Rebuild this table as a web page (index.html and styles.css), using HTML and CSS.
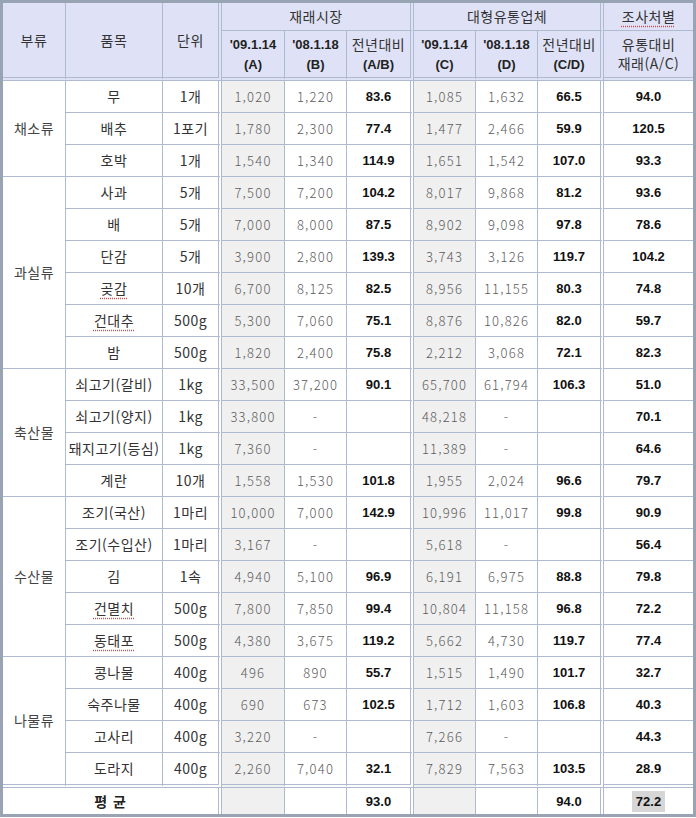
FILE: index.html
```html
<!DOCTYPE html>
<html lang="ko">
<head>
<meta charset="utf-8">
<title>품목별 가격 비교</title>
<link rel="stylesheet" href="styles.css">
</head>
<body>
<table class="tbl">
  <colgroup>
    <col class="c-cat"><col class="c-item"><col class="c-unit">
    <col class="c-a"><col class="c-b"><col class="c-ab">
    <col class="c-c"><col class="c-d"><col class="c-cd">
    <col class="c-ac">
  </colgroup>
  <thead>
    <tr class="h1">
      <th rowspan="2" class="db">부류</th>
      <th rowspan="2" class="db">품목</th>
      <th rowspan="2" class="db dr">단위</th>
      <th colspan="3" class="dr">재래시장</th>
      <th colspan="3" class="dr">대형유통업체</th>
      <th class="last"><span class="spell">조사처별</span></th>
    </tr>
    <tr class="h2">
      <th class="db"><span class="hd">'09.1.14<br>(A)</span></th>
      <th class="db"><span class="hd">'08.1.18<br>(B)</span></th>
      <th class="db dr">전년대비<br><span class="hd">(A/B)</span></th>
      <th class="db"><span class="hd">'09.1.14<br>(C)</span></th>
      <th class="db"><span class="hd">'08.1.18<br>(D)</span></th>
      <th class="db dr">전년대비<br><span class="hd">(C/D)</span></th>
      <th class="db last">유통대비<br>재래(A/C)</th>
    </tr>
  </thead>
  <tbody>
    <tr><td rowspan="3" class="cat">채소류</td><td class="item">무</td><td class="unit dr">1개</td><td class="n g">1,020</td><td class="n">1,220</td><td class="b dr">83.6</td><td class="n g">1,085</td><td class="n">1,632</td><td class="b dr">66.5</td><td class="b last">94.0</td></tr>
    <tr><td class="item">배추</td><td class="unit dr">1포기</td><td class="n g">1,780</td><td class="n">2,300</td><td class="b dr">77.4</td><td class="n g">1,477</td><td class="n">2,466</td><td class="b dr">59.9</td><td class="b last">120.5</td></tr>
    <tr><td class="item">호박</td><td class="unit dr">1개</td><td class="n g">1,540</td><td class="n">1,340</td><td class="b dr">114.9</td><td class="n g">1,651</td><td class="n">1,542</td><td class="b dr">107.0</td><td class="b last">93.3</td></tr>

    <tr><td rowspan="6" class="cat">과실류</td><td class="item">사과</td><td class="unit dr">5개</td><td class="n g">7,500</td><td class="n">7,200</td><td class="b dr">104.2</td><td class="n g">8,017</td><td class="n">9,868</td><td class="b dr">81.2</td><td class="b last">93.6</td></tr>
    <tr><td class="item">배</td><td class="unit dr">5개</td><td class="n g">7,000</td><td class="n">8,000</td><td class="b dr">87.5</td><td class="n g">8,902</td><td class="n">9,098</td><td class="b dr">97.8</td><td class="b last">78.6</td></tr>
    <tr><td class="item">단감</td><td class="unit dr">5개</td><td class="n g">3,900</td><td class="n">2,800</td><td class="b dr">139.3</td><td class="n g">3,743</td><td class="n">3,126</td><td class="b dr">119.7</td><td class="b last">104.2</td></tr>
    <tr><td class="item"><span class="spell">곶감</span></td><td class="unit dr">10개</td><td class="n g">6,700</td><td class="n">8,125</td><td class="b dr">82.5</td><td class="n g">8,956</td><td class="n">11,155</td><td class="b dr">80.3</td><td class="b last">74.8</td></tr>
    <tr><td class="item"><span class="spell">건대추</span></td><td class="unit dr">500g</td><td class="n g">5,300</td><td class="n">7,060</td><td class="b dr">75.1</td><td class="n g">8,876</td><td class="n">10,826</td><td class="b dr">82.0</td><td class="b last">59.7</td></tr>
    <tr><td class="item">밤</td><td class="unit dr">500g</td><td class="n g">1,820</td><td class="n">2,400</td><td class="b dr">75.8</td><td class="n g">2,212</td><td class="n">3,068</td><td class="b dr">72.1</td><td class="b last">82.3</td></tr>

    <tr><td rowspan="4" class="cat">축산물</td><td class="item">쇠고기(갈비)</td><td class="unit dr">1kg</td><td class="n g">33,500</td><td class="n">37,200</td><td class="b dr">90.1</td><td class="n g">65,700</td><td class="n">61,794</td><td class="b dr">106.3</td><td class="b last">51.0</td></tr>
    <tr><td class="item">쇠고기(양지)</td><td class="unit dr">1kg</td><td class="n g">33,800</td><td class="n">-</td><td class="b dr"></td><td class="n g">48,218</td><td class="n">-</td><td class="b dr"></td><td class="b last">70.1</td></tr>
    <tr><td class="item">돼지고기(등심)</td><td class="unit dr">1kg</td><td class="n g">7,360</td><td class="n">-</td><td class="b dr"></td><td class="n g">11,389</td><td class="n">-</td><td class="b dr"></td><td class="b last">64.6</td></tr>
    <tr><td class="item">계란</td><td class="unit dr">10개</td><td class="n g">1,558</td><td class="n">1,530</td><td class="b dr">101.8</td><td class="n g">1,955</td><td class="n">2,024</td><td class="b dr">96.6</td><td class="b last">79.7</td></tr>

    <tr><td rowspan="5" class="cat">수산물</td><td class="item">조기(국산)</td><td class="unit dr">1마리</td><td class="n g">10,000</td><td class="n">7,000</td><td class="b dr">142.9</td><td class="n g">10,996</td><td class="n">11,017</td><td class="b dr">99.8</td><td class="b last">90.9</td></tr>
    <tr><td class="item">조기(수입산)</td><td class="unit dr">1마리</td><td class="n g">3,167</td><td class="n">-</td><td class="b dr"></td><td class="n g">5,618</td><td class="n">-</td><td class="b dr"></td><td class="b last">56.4</td></tr>
    <tr><td class="item">김</td><td class="unit dr">1속</td><td class="n g">4,940</td><td class="n">5,100</td><td class="b dr">96.9</td><td class="n g">6,191</td><td class="n">6,975</td><td class="b dr">88.8</td><td class="b last">79.8</td></tr>
    <tr><td class="item"><span class="spell">건멸치</span></td><td class="unit dr">500g</td><td class="n g">7,800</td><td class="n">7,850</td><td class="b dr">99.4</td><td class="n g">10,804</td><td class="n">11,158</td><td class="b dr">96.8</td><td class="b last">72.2</td></tr>
    <tr><td class="item"><span class="spell">동태포</span></td><td class="unit dr">500g</td><td class="n g">4,380</td><td class="n">3,675</td><td class="b dr">119.2</td><td class="n g">5,662</td><td class="n">4,730</td><td class="b dr">119.7</td><td class="b last">77.4</td></tr>

    <tr><td rowspan="4" class="cat db">나물류</td><td class="item">콩나물</td><td class="unit dr">400g</td><td class="n g">496</td><td class="n">890</td><td class="b dr">55.7</td><td class="n g">1,515</td><td class="n">1,490</td><td class="b dr">101.7</td><td class="b last">32.7</td></tr>
    <tr><td class="item">숙주나물</td><td class="unit dr">400g</td><td class="n g">690</td><td class="n">673</td><td class="b dr">102.5</td><td class="n g">1,712</td><td class="n">1,603</td><td class="b dr">106.8</td><td class="b last">40.3</td></tr>
    <tr><td class="item">고사리</td><td class="unit dr">400g</td><td class="n g">3,220</td><td class="n">-</td><td class="b dr"></td><td class="n g">7,266</td><td class="n">-</td><td class="b dr"></td><td class="b last">44.3</td></tr>
    <tr class="lastrow"><td class="item db">도라지</td><td class="unit dr db">400g</td><td class="n g db">2,260</td><td class="n db">7,040</td><td class="b dr db">32.1</td><td class="n g db">7,829</td><td class="n db">7,563</td><td class="b dr db">103.5</td><td class="b last db">28.9</td></tr>
  </tbody>
  <tfoot>
    <tr class="avg">
      <td colspan="3" class="avg-label dr">평 균</td>
      <td class="g"></td><td></td><td class="b dr">93.0</td>
      <td class="g"></td><td></td><td class="b dr">94.0</td>
      <td class="b last"><span class="hl">72.2</span></td>
    </tr>
  </tfoot>
</table>
</body>
</html>
```
FILE: styles.css
```css
html, body {
  margin: 0;
  padding: 0;
  background: #ffffff;
}

.tbl {
  width: 696px;
  table-layout: fixed;
  border-collapse: separate;
  border-spacing: 0;
  border: 3px solid #98a4b4;
  font-family: "Noto Sans CJK KR", "Liberation Sans", sans-serif;
  font-size: 14px;
  color: #333;
}

.c-cat { width: 63px; }
.c-item { width: 97px; }
.c-unit { width: 59px; }
.c-a { width: 63px; }
.c-b { width: 62px; }
.c-ab { width: 67px; }
.c-c { width: 62px; }
.c-d { width: 62px; }
.c-cd { width: 66px; }
.c-ac { width: 89px; }

th, td {
  padding: 0;
  text-align: center;
  vertical-align: middle;
  border-right: 1px solid #aebad0;
  border-bottom: 1px solid #aebad0;
  white-space: nowrap;
  overflow: hidden;
  line-height: 19px;
}

th {
  background: #dfe2f6;
  font-weight: normal;
  font-size: 14px;
  letter-spacing: 0.5px;
  color: #333;
}

.h1 { height: 28px; }
.h2 { height: 50px; }
tbody tr { height: 32px; }
tbody tr.lastrow { height: 35px; }
.avg { height: 26px; }

.last { border-right: none; }
.dr { border-right: 4px double #aebad0; }
.db { border-bottom: 4px double #aebad0; }

.hd {
  font-family: "Liberation Sans", "Noto Sans CJK KR", sans-serif;
  font-weight: bold;
  font-size: 13px;
  letter-spacing: 0;
  color: #222;
}

.spell {
  text-decoration: underline dotted #d04848;
  text-underline-offset: 4px;
}

.cat {
  color: #444;
  letter-spacing: 0.5px;
}

.item, .unit {
  color: #333;
  letter-spacing: 0.5px;
}

.n {
  color: #5c5c5c;
  font-size: 13px;
  letter-spacing: 1.2px;
  font-weight: 300;
}

.g { background: #f0f0f0; }

.b {
  font-family: "Liberation Sans", "Noto Sans CJK KR", sans-serif;
  font-weight: bold;
  font-size: 13px;
  color: #111;
}

tfoot td { border-bottom: none; }

.avg-label {
  font-family: "Noto Sans CJK KR", sans-serif;
  font-size: 14px;
  font-weight: bold;
  color: #222;
  letter-spacing: 1px;
}

.hl {
  background: #d6d6d6;
  padding: 3px 4px;
}
```
